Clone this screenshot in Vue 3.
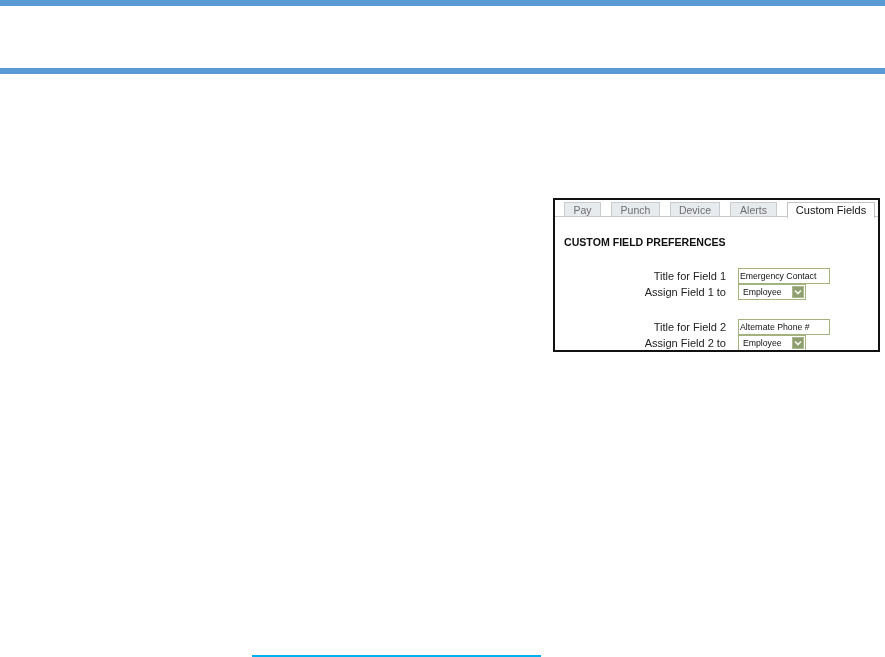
<template>
  <div class="page">
    <header class="head"></header>
    <main class="body">
      <figure class="shot">
        <ul class="tabs">
          <li v-for="tab in tabs" :key="tab" class="tab" :class="{ active: tab === current }">{{ tab }}</li>
        </ul>
        <div class="panel">
          <h3>CUSTOM FIELD PREFERENCES</h3>
          <div v-for="field in fields" :key="field.n" class="group">
            <div class="row">
              <label>Title for Field {{ field.n }}</label>
              <div class="input">{{ field.title }}</div>
            </div>
            <div class="row">
              <label>Assign Field {{ field.n }} to</label>
              <div class="select">
                <span>Employee</span>
                <svg class="arrow" width="12" height="12" viewBox="0 0 12 12">
                  <rect width="12" height="12" fill="#8f9f71" />
                  <rect x="0.5" y="0.5" width="11" height="11" fill="none" stroke="#a9b78e" />
                  <path d="M3 4.5l3 3 3-3" fill="none" stroke="#f4f7ec" stroke-width="1.6" />
                </svg>
              </div>
            </div>
          </div>
        </div>
      </figure>
    </main>
    <footer class="foot"></footer>
  </div>
</template>

<script setup>
const tabs = ["Pay", "Punch", "Device", "Alerts", "Custom Fields"];
const current = "Custom Fields";
const fields = [
  { n: 1, title: "Emergency Contact" },
  { n: 2, title: "Alternate Phone #" },
];
</script>

<style>
html,
body {
  background: #fff;
}
</style>

<style scoped>
.page {
  display: flex;
  flex-direction: column;
  height: 657px;
  overflow: hidden;
  font-family: "Liberation Sans", Arial, sans-serif;
}

.head {
  height: 62px;
  border-top: 6px solid #5b9bd5;
  border-bottom: 6px solid #5b9bd5;
}

.body {
  flex: 1;
  display: flex;
  justify-content: flex-end;
  align-items: flex-start;
  padding: 124px 5px 0 0;
}

.shot {
  margin: 0;
  width: 327px;
  height: 154px;
  box-sizing: border-box;
  border: 2px solid #111;
  background: #fff;
  overflow: hidden;
}

.tabs {
  display: flex;
  list-style: none;
  margin: 0;
  padding: 2px 0 0 9px;
  height: 14px;
  gap: 10px;
  filter: blur(0.3px);
  position: relative;
  z-index: 1;
}

.tab {
  height: 13px;
  line-height: 14px;
  border: 1px solid #c8ccd0;
  border-bottom: 0;
  background: #e7ebee;
  color: #6f6f6f;
  font-size: 10.5px;
  text-align: center;
  white-space: nowrap;
}

.tab:nth-child(1) { width: 35px; }
.tab:nth-child(2) { width: 47px; }
.tab:nth-child(3) { width: 48px; }
.tab:nth-child(4) { width: 45px; }

.tab.active {
  width: 86px;
  height: 15px;
  background: #fff;
  color: #111;
  font-size: 11px;
  border-color: #c4c4c4;
}

.panel {
  border-top: 1px solid #c8c8c8;
  padding-top: 19px;
  filter: blur(0.3px);
}

h3 {
  margin: 0 0 19px 9px;
  font-size: 10.6px;
  line-height: 13px;
  font-weight: bold;
  color: #111;
}

.group {
  margin-bottom: 19px;
}

.row {
  display: flex;
  align-items: center;
  height: 16px;
  gap: 12px;
}

label {
  width: 171px;
  text-align: right;
  font-size: 11px;
  color: #222;
}

.input,
.select {
  box-sizing: border-box;
  height: 16px;
  border: 1px solid #a3b27e;
  background: #fff;
  color: #111;
  font-size: 8.7px;
}

.input {
  width: 92px;
  line-height: 14px;
  padding-left: 1px;
}

.select {
  width: 68px;
  display: flex;
  align-items: center;
  justify-content: space-between;
  padding: 0 1px 0 4px;
}

.arrow {
  flex: none;
}

.foot {
  flex: none;
  height: 2px;
  width: 289px;
  margin-left: 252px;
  background: #00b0f0;
}
</style>
